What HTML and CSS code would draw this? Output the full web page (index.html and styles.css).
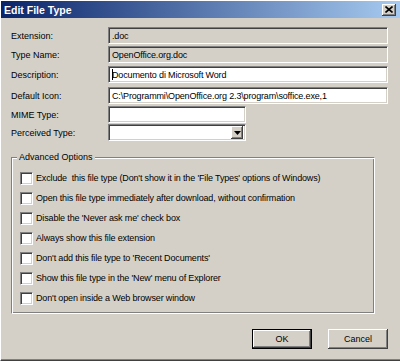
FILE: index.html
```html
<!DOCTYPE html>
<html>
<head>
<meta charset="utf-8">
<link rel="stylesheet" href="styles.css">
</head>
<body>
<div class="window">
  <div class="titlebar">
    <span class="title">Edit File Type</span>
    <span class="close"><svg width="8" height="7" viewBox="0 0 8 7"><path d="M0.5 0.5 L7.5 6.5 M7.5 0.5 L0.5 6.5" stroke="#000" stroke-width="1.6" fill="none"/></svg></span>
  </div>
  <div class="content">
    <div class="form">
      <div class="label">Extension:</div>
      <div class="field readonly">.doc</div>
      <div class="label">Type Name:</div>
      <div class="field readonly">OpenOffice.org.doc</div>
      <div class="label">Description:</div>
      <div class="field"><span class="caret"></span>Documento di Microsoft Word</div>
      <div class="label">Default Icon:</div>
      <div class="field">C:\Programmi\OpenOffice.org 2.3\program\soffice.exe,1</div>
      <div class="label">MIME Type:</div>
      <div class="field short"></div>
      <div class="label">Perceived Type:</div>
      <div class="field short combo"><span class="arrow"><svg width="7" height="4" viewBox="0 0 7 4"><path d="M0 0 H7 L3.5 4 Z" fill="#000"/></svg></span></div>
    </div>
    <div class="group">
      <span class="legend">Advanced Options</span>
      <div class="check"><span class="box"></span><span>Exclude&nbsp; this file type (Don't show it in the 'File Types' options of Windows)</span></div>
      <div class="check"><span class="box"></span><span>Open this file type immediately after download, without confirmation</span></div>
      <div class="check"><span class="box"></span><span>Disable the 'Never ask me' check box</span></div>
      <div class="check"><span class="box"></span><span>Always show this file extension</span></div>
      <div class="check"><span class="box"></span><span>Don't add this file type to 'Recent Documents'</span></div>
      <div class="check"><span class="box"></span><span>Show this file type in the 'New' menu of Explorer</span></div>
      <div class="check"><span class="box"></span><span>Don't open inside a Web browser window</span></div>
    </div>
    <div class="buttons">
      <div class="btn default">OK</div>
      <div class="btn">Cancel</div>
    </div>
  </div>
</div>
</body>
</html>
```
FILE: styles.css
```css
* { box-sizing: border-box; }
html, body { margin: 0; padding: 0; background: #d4d0c8; }
body { font-family: "Liberation Sans", Arial, sans-serif; font-size: 9px; color: #000; }
.window {
  width: 400px; height: 361px;
  background: #d4d0c8;
  border-top: 1px solid #ffffff;
  border-left: 1px solid #ffffff;
  border-bottom: 1px solid #404040;
  box-shadow: inset 0 -1px 0 #808080;
  display: flex; flex-direction: column;
  overflow: hidden;
}
.titlebar {
  height: 17px;
  background: linear-gradient(to right, #0a246a, #a6caf0);
  display: flex; align-items: center; justify-content: space-between;
  padding: 0 4px 0 3px;
}
.title { color: #fff; font-weight: bold; font-size: 10.5px; }
.close {
  width: 14px; height: 12px;
  background: #d4d0c8;
  box-shadow: inset -1px -1px 0 #404040, inset 1px 1px 0 #ffffff, inset -2px -2px 0 #808080;
  display: flex; align-items: center; justify-content: center;
}
.close svg { display: block; }
.content { padding: 9px 12px 0 10px; display: flex; flex-direction: column; }
.form {
  display: grid;
  grid-template-columns: 97px 280px;
  grid-template-rows: 19px 20px 21px 19px 18px 17px;
}
.label { height: 17px; display: flex; align-items: center; }
.field {
  height: 17px;
  background: #fff;
  border: 1px solid; border-color: #808080 #ffffff #ffffff #808080;
  box-shadow: inset 1px 1px 0 #404040, inset -1px -1px 0 #d4d0c8;
  padding-left: 3px;
  display: flex; align-items: center;
  white-space: nowrap; overflow: hidden;
  letter-spacing: -0.15px;
}
.field.readonly { background: #d4d0c8; }
.field.short { width: 138px; }
.caret { display: inline-block; width: 1px; height: 11px; background: #000; margin-right: -1px; }
.combo { justify-content: flex-end; padding: 2px; }
.arrow {
  width: 12px; height: 13px;
  background: #d4d0c8;
  box-shadow: inset -1px -1px 0 #404040, inset 1px 1px 0 #ffffff, inset -2px -2px 0 #808080;
  display: flex; align-items: center; justify-content: center;
}
.arrow svg { display: block; }
.group {
  position: relative;
  margin-top: 16px;
  width: 364px; height: 157px;
  border: 1px solid #808080;
  border-right-color: #ffffff; border-bottom-color: #ffffff;
  box-shadow: inset 1px 1px 0 #ffffff, inset -1px -1px 0 #808080;
  padding: 14px 0 0 8px;
  display: flex; flex-direction: column;
}
.legend {
  position: absolute; top: -7px; left: 5px;
  background: #d4d0c8; padding: 0 2px;
  line-height: 13px;
}
.check { height: 20px; display: flex; align-items: flex-start; gap: 3px; }
.check span:last-child { line-height: 13px; white-space: nowrap; letter-spacing: -0.15px; }
.box {
  width: 13px; height: 13px; flex: none;
  background: #fff;
  border: 1px solid; border-color: #808080 #ffffff #ffffff #808080;
  box-shadow: inset 1px 1px 0 #404040, inset -1px -1px 0 #d4d0c8;
}
.buttons { margin-top: 15px; display: flex; justify-content: flex-end; gap: 16px; }
.btn {
  width: 60px; height: 20px;
  background: #d4d0c8;
  box-shadow: inset -1px -1px 0 #404040, inset 1px 1px 0 #ffffff, inset -2px -2px 0 #808080;
  display: flex; align-items: center; justify-content: center;
}
.btn.default {
  border: 1px solid #000;
}
```
